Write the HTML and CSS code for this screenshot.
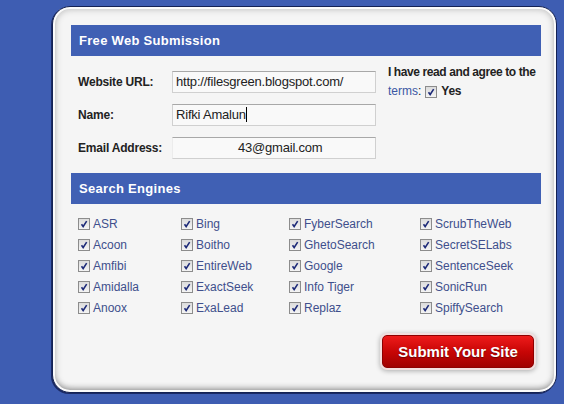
FILE: index.html
```html
<!DOCTYPE html>
<html lang="en">
<head>
    <meta charset="UTF-8">
    <title>Free Web Submission</title>
    <link rel="stylesheet" href="styles.css">
</head>
<body>
    <div class="card">
        <!-- submission details -->
        <div class="bar">Free Web Submission</div>
        <div class="form">
            <div class="fields">
                <label class="label">Website URL:</label>
                <div class="field">http://filesgreen.blogspot.com/</div>
                <label class="label">Name:</label>
                <div class="field">Rifki Amalun<span class="caret"></span></div>
                <label class="label">Email Address:</label>
                <div class="field field-email">43@gmail.com</div>
            </div>
            <div class="terms">
                <div class="terms-text">I have read and agree to the</div>
                <div class="terms-line">
                    <span><a href="#" class="terms-link">terms</a>:</span>
                    <span class="check"><svg viewBox="0 0 12 12"><path d="M3 6.2 L5 9 L9.2 2.6" fill="none" stroke="#1d2a78" stroke-width="1.9"/></svg></span>
                    <b>Yes</b>
                </div>
            </div>
        </div>

        <!-- search engines -->
        <div class="bar">Search Engines</div>
        <div class="engines">
            <div class="engine"><span class="check"><svg viewBox="0 0 12 12"><path d="M3 6.2 L5 9 L9.2 2.6" fill="none" stroke="#1d2a78" stroke-width="1.9"/></svg></span>ASR</div>
            <div class="engine"><span class="check"><svg viewBox="0 0 12 12"><path d="M3 6.2 L5 9 L9.2 2.6" fill="none" stroke="#1d2a78" stroke-width="1.9"/></svg></span>Bing</div>
            <div class="engine"><span class="check"><svg viewBox="0 0 12 12"><path d="M3 6.2 L5 9 L9.2 2.6" fill="none" stroke="#1d2a78" stroke-width="1.9"/></svg></span>FyberSearch</div>
            <div class="engine"><span class="check"><svg viewBox="0 0 12 12"><path d="M3 6.2 L5 9 L9.2 2.6" fill="none" stroke="#1d2a78" stroke-width="1.9"/></svg></span>ScrubTheWeb</div>

            <div class="engine"><span class="check"><svg viewBox="0 0 12 12"><path d="M3 6.2 L5 9 L9.2 2.6" fill="none" stroke="#1d2a78" stroke-width="1.9"/></svg></span>Acoon</div>
            <div class="engine"><span class="check"><svg viewBox="0 0 12 12"><path d="M3 6.2 L5 9 L9.2 2.6" fill="none" stroke="#1d2a78" stroke-width="1.9"/></svg></span>Boitho</div>
            <div class="engine"><span class="check"><svg viewBox="0 0 12 12"><path d="M3 6.2 L5 9 L9.2 2.6" fill="none" stroke="#1d2a78" stroke-width="1.9"/></svg></span>GhetoSearch</div>
            <div class="engine"><span class="check"><svg viewBox="0 0 12 12"><path d="M3 6.2 L5 9 L9.2 2.6" fill="none" stroke="#1d2a78" stroke-width="1.9"/></svg></span>SecretSELabs</div>

            <div class="engine"><span class="check"><svg viewBox="0 0 12 12"><path d="M3 6.2 L5 9 L9.2 2.6" fill="none" stroke="#1d2a78" stroke-width="1.9"/></svg></span>Amfibi</div>
            <div class="engine"><span class="check"><svg viewBox="0 0 12 12"><path d="M3 6.2 L5 9 L9.2 2.6" fill="none" stroke="#1d2a78" stroke-width="1.9"/></svg></span>EntireWeb</div>
            <div class="engine"><span class="check"><svg viewBox="0 0 12 12"><path d="M3 6.2 L5 9 L9.2 2.6" fill="none" stroke="#1d2a78" stroke-width="1.9"/></svg></span>Google</div>
            <div class="engine"><span class="check"><svg viewBox="0 0 12 12"><path d="M3 6.2 L5 9 L9.2 2.6" fill="none" stroke="#1d2a78" stroke-width="1.9"/></svg></span>SentenceSeek</div>

            <div class="engine"><span class="check"><svg viewBox="0 0 12 12"><path d="M3 6.2 L5 9 L9.2 2.6" fill="none" stroke="#1d2a78" stroke-width="1.9"/></svg></span>Amidalla</div>
            <div class="engine"><span class="check"><svg viewBox="0 0 12 12"><path d="M3 6.2 L5 9 L9.2 2.6" fill="none" stroke="#1d2a78" stroke-width="1.9"/></svg></span>ExactSeek</div>
            <div class="engine"><span class="check"><svg viewBox="0 0 12 12"><path d="M3 6.2 L5 9 L9.2 2.6" fill="none" stroke="#1d2a78" stroke-width="1.9"/></svg></span>Info Tiger</div>
            <div class="engine"><span class="check"><svg viewBox="0 0 12 12"><path d="M3 6.2 L5 9 L9.2 2.6" fill="none" stroke="#1d2a78" stroke-width="1.9"/></svg></span>SonicRun</div>

            <div class="engine"><span class="check"><svg viewBox="0 0 12 12"><path d="M3 6.2 L5 9 L9.2 2.6" fill="none" stroke="#1d2a78" stroke-width="1.9"/></svg></span>Anoox</div>
            <div class="engine"><span class="check"><svg viewBox="0 0 12 12"><path d="M3 6.2 L5 9 L9.2 2.6" fill="none" stroke="#1d2a78" stroke-width="1.9"/></svg></span>ExaLead</div>
            <div class="engine"><span class="check"><svg viewBox="0 0 12 12"><path d="M3 6.2 L5 9 L9.2 2.6" fill="none" stroke="#1d2a78" stroke-width="1.9"/></svg></span>Replaz</div>
            <div class="engine"><span class="check"><svg viewBox="0 0 12 12"><path d="M3 6.2 L5 9 L9.2 2.6" fill="none" stroke="#1d2a78" stroke-width="1.9"/></svg></span>SpiffySearch</div>
        </div>

        <div class="actions">
            <button class="submit">Submit Your Site</button>
        </div>
    </div>
</body>
</html>
```

FILE: styles.css
```css
/* ====== Base ====== */
* {
    box-sizing: border-box;
    margin: 0;
    padding: 0;
}

body {
    font-family: "Liberation Sans", Arial, sans-serif;
    background-color: #3e5db2;
    color: #222;
    height: 404px;
    overflow: hidden;
}

/* ====== Card ====== */
.card {
    width: 505px;
    height: 387px;
    margin: 6px 0 0 52px;
    padding: 18px 15px 0 18px;
    background-color: #f5f5f5;
    border: 1px solid #142254;
    border-radius: 18px;
    box-shadow: -1px 1px 0 0 #1a2a66, inset 0 0 0 2px #fbfbfb, inset 0 0 7px 2px rgba(0, 0, 0, 0.25), inset 0 -5px 6px -2px rgba(0, 0, 0, 0.3);
}

.bar {
    height: 31px;
    line-height: 31px;
    padding-left: 8px;
    background-color: #4060b4;
    color: #fff;
    font-size: 13px;
    font-weight: bold;
    letter-spacing: 0.3px;
}

/* ====== Form ====== */
.form {
    display: flex;
    padding: 7px 0 14px 7px;
}

.fields {
    display: grid;
    grid-template-columns: 94px 204px;
    row-gap: 11px;
    padding-top: 8px;
    align-items: center;
}

.label {
    font-size: 12px;
    font-weight: bold;
    color: #222;
    letter-spacing: -0.2px;
}

.field {
    height: 22px;
    line-height: 20px;
    padding-left: 3px;
    font-size: 13px;
    color: #222;
    background-color: #f9f9f9;
    border: 1px solid #d0d0d0;
    border-top-color: #a8a8a8;
    letter-spacing: -0.2px;
}

.field-email {
    padding-left: 65px;
    border-left-color: #ececec;
}

.caret {
    display: inline-block;
    width: 1px;
    height: 15px;
    background-color: #000;
    vertical-align: -3px;
}

.terms {
    margin-left: 12px;
    font-size: 12px;
    line-height: 19px;
}

.terms-text {
    font-weight: bold;
    letter-spacing: -0.4px;
}

.terms-line {
    display: flex;
    align-items: center;
    gap: 4px;
}

.terms-link {
    color: #3b57a4;
    text-decoration: none;
}

.terms-line b {
    letter-spacing: -0.3px;
}

/* ====== Checkbox ====== */
.check {
    display: inline-block;
    width: 12px;
    height: 12px;
    border: 1px solid #8c8c8c;
    background: linear-gradient(#dcdcdc, #f4f4f4);
    flex-shrink: 0;
}

.check svg {
    display: block;
    width: 10px;
    height: 10px;
}

/* ====== Engines ====== */
.engines {
    display: grid;
    grid-template-columns: 103px 108px 131px 1fr;
    grid-auto-rows: 21px;
    padding: 9px 0 0 7px;
}

.engine {
    display: flex;
    align-items: center;
    gap: 3px;
    font-size: 12px;
    color: #404f8c;
}

/* ====== Submit ====== */
.actions {
    display: flex;
    justify-content: flex-end;
    padding: 17px 7px 0 0;
}

.submit {
    width: 152px;
    height: 33px;
    font-family: "Liberation Sans", Arial, sans-serif;
    font-size: 15px;
    font-weight: bold;
    color: #fff;
    text-shadow: 0 1px 1px rgba(0, 0, 0, 0.4);
    background: linear-gradient(#ee1b1b, #c80606 50%, #a00000);
    border: 1px solid #8e0000;
    border-radius: 5px;
    box-shadow: 0 0 0 2px #f3dede, 0 1px 5px 2px rgba(0, 0, 0, 0.3);
}
```
